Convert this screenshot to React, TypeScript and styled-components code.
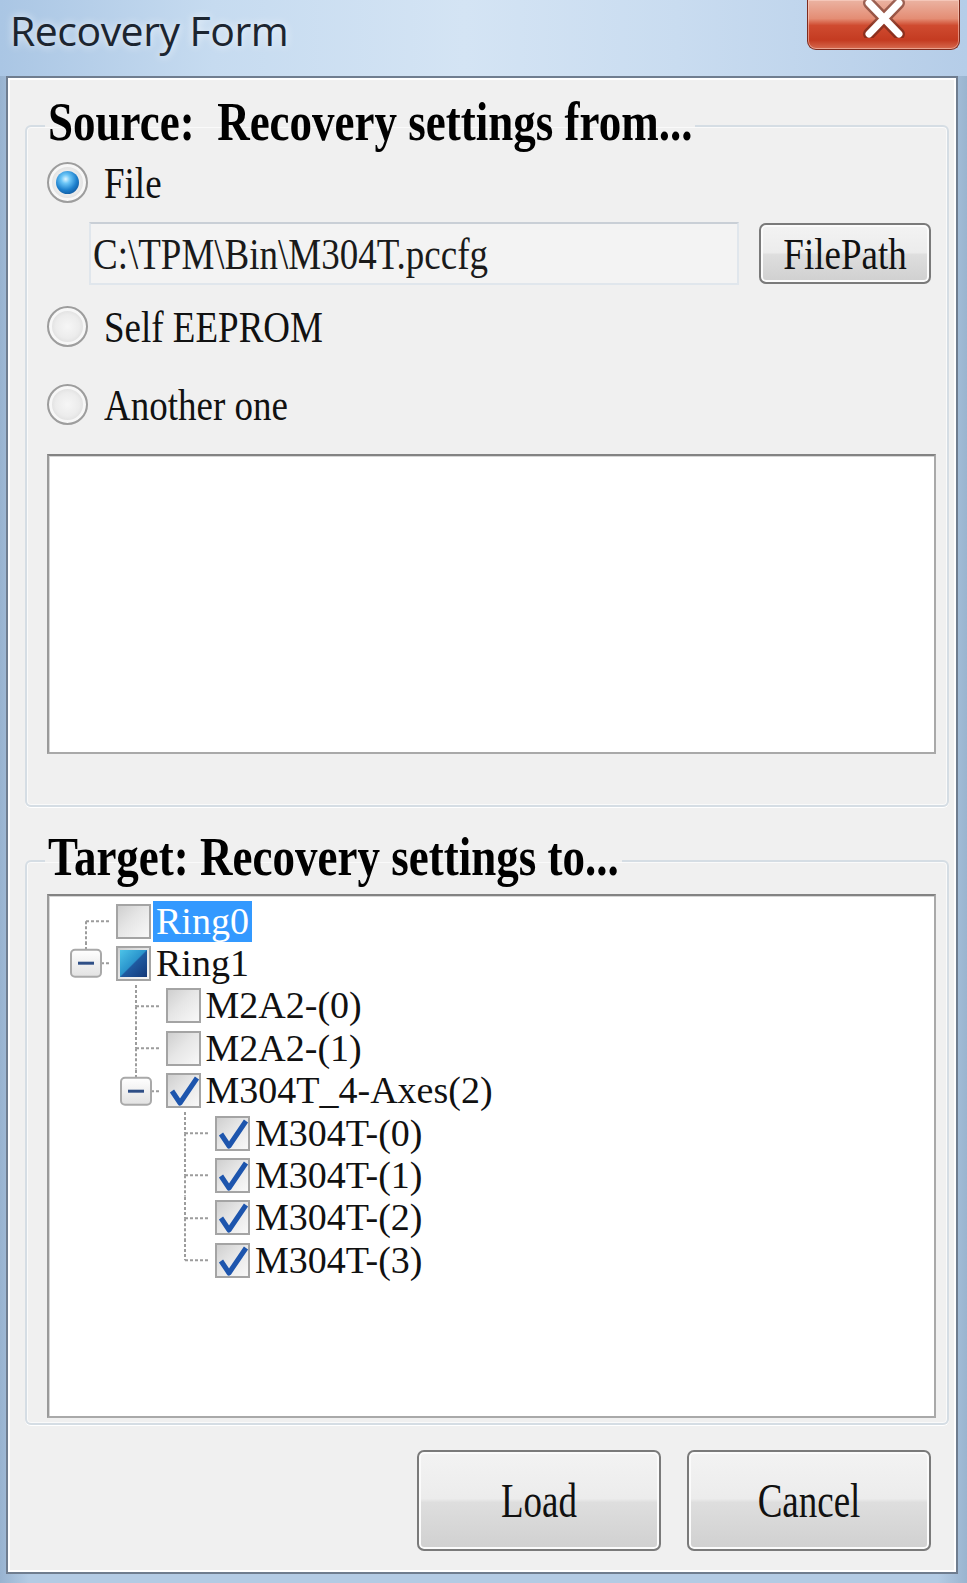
import { FC } from 'react';
import styled, { createGlobalStyle } from 'styled-components';

type Check = 'none' | 'checked' | 'partial';

interface TreeNode {
  level: number;
  label: string;
  check: Check;
  selected?: boolean;
  expander?: boolean;
  up: boolean;
  down: boolean;
}

const nodes: TreeNode[] = [
  { level: 0, label: 'Ring0', check: 'none', selected: true, up: false, down: true },
  { level: 0, label: 'Ring1', check: 'partial', expander: true, up: true, down: false },
  { level: 1, label: 'M2A2-(0)', check: 'none', up: true, down: true },
  { level: 1, label: 'M2A2-(1)', check: 'none', up: true, down: true },
  { level: 1, label: 'M304T_4-Axes(2)', check: 'checked', expander: true, up: true, down: false },
  { level: 2, label: 'M304T-(0)', check: 'checked', up: true, down: true },
  { level: 2, label: 'M304T-(1)', check: 'checked', up: true, down: true },
  { level: 2, label: 'M304T-(2)', check: 'checked', up: true, down: true },
  { level: 2, label: 'M304T-(3)', check: 'checked', up: true, down: false },
];

const ROW_H = 42.4;

const Connector: FC<{ node: TreeNode }> = ({ node }) => {
  const mid = ROW_H / 2;
  return (
    <svg width="50" height={ROW_H} viewBox={`0 0 50 ${ROW_H}`}>
      <g stroke="#9c9c9c" strokeWidth="2" strokeDasharray="3 2">
        {node.up && <line x1="20" y1="0" x2="20" y2={mid} />}
        {node.down && <line x1="20" y1={mid} x2="20" y2={ROW_H} />}
        <line x1="20" y1={mid} x2="45" y2={mid} />
      </g>
      {node.expander && (
        <g>
          <defs>
            <linearGradient id="exp" x1="0" y1="0" x2="0" y2="1">
              <stop offset="0" stopColor="#ffffff" />
              <stop offset="1" stopColor="#e2e2e2" />
            </linearGradient>
          </defs>
          <rect x="5" y={mid - 13.5} width="30" height="27" rx="4" fill="url(#exp)" stroke="#a9a9a9" strokeWidth="2" />
          <line x1="12" y1={mid} x2="28" y2={mid} stroke="#2f4f86" strokeWidth="3" />
        </g>
      )}
    </svg>
  );
};

const CheckBox: FC<{ state: Check }> = ({ state }) => (
  <Box>
    {state === 'partial' && <Partial />}
    {state === 'checked' && (
      <svg width="35" height="35" viewBox="0 0 35 35">
        <path d="M6 18 L14 30 L31 5" fill="none" stroke="#1d55ad" strokeWidth="5" strokeLinejoin="round" />
      </svg>
    )}
  </Box>
);

const App: FC = () => {
  return (
    <Window>
      <GlobalStyle />
      <TitleBar>
        <Title>Recovery Form</Title>
        <CloseButton>
          <svg width="46" height="38" viewBox="0 0 46 38">
            <path d="M8 3 L38 34 M38 3 L8 34" stroke="#5b2016" strokeOpacity="0.55" strokeWidth="12" strokeLinecap="round" />
            <path d="M8 3 L38 34 M38 3 L8 34" stroke="#ffffff" strokeWidth="7" strokeLinecap="round" />
          </svg>
        </CloseButton>
      </TitleBar>
      <Client>
        <Group>
          <Legend>
            <Tall>Source:  Recovery settings from...</Tall>
          </Legend>
          <RadioRow>
            <Radio>
              <Dot />
            </Radio>
            <Label>
              <Tall>File</Tall>
            </Label>
          </RadioRow>
          <PathRow>
            <TextBox>
              <Tall>C:\TPM\Bin\M304T.pccfg</Tall>
            </TextBox>
            <Button $w={172} $h={61}>
              <Tall>FilePath</Tall>
            </Button>
          </PathRow>
          <RadioRow $mt={19}>
            <Radio />
            <Label>
              <Tall>Self EEPROM</Tall>
            </Label>
          </RadioRow>
          <RadioRow $mt={34}>
            <Radio />
            <Label>
              <Tall>Another one</Tall>
            </Label>
          </RadioRow>
          <ListBox />
        </Group>
        <Group $target>
          <Legend>
            <Tall>Target: Recovery settings to...</Tall>
          </Legend>
          <TreeBox>
            {nodes.map((n) => (
              <TreeRow key={n.label} $level={n.level}>
                <Connector node={n} />
                <CheckBox state={n.check} />
                <NodeLabel $selected={n.selected}>{n.label}</NodeLabel>
              </TreeRow>
            ))}
          </TreeBox>
        </Group>
        <ButtonRow>
          <Button $w={244} $h={101}>
            <Tall $s={1.3}>Load</Tall>
          </Button>
          <Button $w={244} $h={101}>
            <Tall $s={1.3}>Cancel</Tall>
          </Button>
        </ButtonRow>
      </Client>
    </Window>
  );
};

export default App;

const GlobalStyle = createGlobalStyle`
  html, body {
    margin: 0;
    padding: 0;
  }
  body {
    background: #a6bfd9;
    font-family: "Liberation Serif", "Times New Roman", serif;
  }
`;

const Window = styled.div`
  width: 967px;
  height: 1583px;
  display: flex;
  flex-direction: column;
  box-sizing: border-box;
  background: linear-gradient(90deg, #98b3d0 0%, #b3cbe4 3%, #b3cbe4 97%, #9ab4cf 100%);
  overflow: hidden;
`;

const TitleBar = styled.div`
  height: 76px;
  flex: none;
  display: flex;
  justify-content: space-between;
  align-items: flex-start;
  padding-left: 10px;
  background: linear-gradient(90deg, #aac6e4 0%, #c6dbf0 22%, #d4e4f4 48%, #c9dcf0 70%, #b5cde8 100%);
`;

const Title = styled.div`
  font-family: "Open Sans", "Noto Sans", sans-serif;
  font-size: 41px;
  line-height: 60px;
  color: #1c2530;
  letter-spacing: -0.5px;
  text-shadow: 0 0 8px rgba(255, 255, 255, 0.9);
`;

const CloseButton = styled.div`
  width: 153px;
  height: 50px;
  margin-right: 7px;
  box-sizing: border-box;
  display: flex;
  justify-content: center;
  align-items: flex-start;
  border: 1px solid #7e2a1c;
  border-top: none;
  border-radius: 0 0 9px 9px;
  background: linear-gradient(#ebb3a2 0%, #e48d74 38%, #cf4b30 52%, #c43b21 82%, #d66a4f 100%);
  box-shadow: inset 0 0 0 1px rgba(255, 220, 210, 0.5);
`;

const Client = styled.div`
  flex: 1;
  margin: 0 9px 9px 6px;
  display: flex;
  flex-direction: column;
  box-sizing: border-box;
  padding: 18px 7px 21px 17px;
  border: 2px solid #6f7d8f;
  background: #f0f0f0;
  box-shadow: inset 0 0 0 2px #ffffff;
`;

const Group = styled.fieldset<{ $target?: boolean }>`
  margin: ${(p) => (p.$target ? '24px' : '0')} 0 0 0;
  padding: ${(p) => (p.$target ? '3px 11px 5px 20px' : '4px 11px 51px 20px')};
  border: 2px solid #d5dde4;
  border-radius: 6px;
  box-shadow: inset 0 0 0 1px #fafafa, 0 1px 0 #ffffff;
  min-width: 0;
  display: flex;
  flex-direction: column;
`;

const Legend = styled.legend`
  margin-left: -2px;
  padding: 0 3px 8px;
  font-size: 45px;
  line-height: 52px;
  font-weight: bold;
  white-space: pre;
  color: #000;
`;

const Tall = styled.span<{ $s?: number }>`
  display: inline-block;
  line-height: 0.9;
  transform: scaleY(${(p) => p.$s ?? 1.22});
  white-space: pre;
`;

const RadioRow = styled.div<{ $mt?: number }>`
  height: 44px;
  margin-top: ${(p) => p.$mt ?? 0}px;
  display: flex;
  align-items: center;
`;

const Radio = styled.span`
  width: 41px;
  height: 41px;
  box-sizing: border-box;
  border-radius: 50%;
  border: 2px solid #9d9d9d;
  background: radial-gradient(circle, #f6f6f6 0%, #ececec 45%, #d6d6d6 80%, #cbcbcb 100%);
  box-shadow: inset 0 0 0 3px #f7f7f7;
  display: flex;
  align-items: center;
  justify-content: center;
`;

const Dot = styled.span`
  width: 23px;
  height: 23px;
  border-radius: 50%;
  background: radial-gradient(circle at 42% 35%, #dff5ff 0%, #6cc6f7 22%, #1d80cd 55%, #0b4a8e 90%);
`;

const Label = styled.span`
  margin-left: 16px;
  font-size: 37px;
  color: #111;
`;

const PathRow = styled.div`
  margin-top: 18px;
  height: 63px;
  display: flex;
  align-items: center;
`;

const TextBox = styled.div`
  width: 650px;
  height: 63px;
  margin-left: 42px;
  margin-right: 20px;
  box-sizing: border-box;
  padding-left: 2px;
  display: flex;
  align-items: center;
  font-size: 37px;
  color: #1a1a1a;
  background: #f3f3f3;
  border: 2px solid #e0e6ec;
  border-top-color: #c9cfd6;
`;

const Button = styled.div<{ $w: number; $h: number }>`
  width: ${(p) => p.$w}px;
  height: ${(p) => p.$h}px;
  box-sizing: border-box;
  display: flex;
  align-items: center;
  justify-content: center;
  font-size: 37px;
  color: #111;
  border: 2px solid #7a7a7a;
  border-radius: 7px;
  background: linear-gradient(#f3f3f3 0%, #ececec 48%, #dedede 52%, #d0d0d0 100%);
  box-shadow: inset 0 0 0 2px #fbfbfb;
`;

const ListBox = styled.div`
  margin-top: 28px;
  height: 300px;
  box-sizing: border-box;
  background: #ffffff;
  border: 2px solid #a9a9a9;
  border-top-color: #838383;
  border-left-color: #9a9a9a;
  box-shadow: inset 1px 1px 0 #d6d6d6;
`;

const TreeBox = styled.div`
  height: 524px;
  box-sizing: border-box;
  padding: 4px 0 0 17px;
  background: #ffffff;
  border: 2px solid #a9a9a9;
  border-top-color: #838383;
  border-left-color: #9a9a9a;
  box-shadow: inset 1px 1px 0 #d6d6d6;
`;

const TreeRow = styled.div<{ $level: number }>`
  height: ${ROW_H}px;
  padding-left: ${(p) => p.$level * 49.5}px;
  display: flex;
  align-items: center;
`;

const Box = styled.span`
  position: relative;
  width: 35px;
  height: 35px;
  flex: none;
  box-sizing: border-box;
  border: 2px solid #a4a4a4;
  background: linear-gradient(135deg, #cfcfcf 0%, #e6e6e6 45%, #f8f8f8 100%);
  display: flex;
  align-items: center;
  justify-content: center;
  svg {
    position: absolute;
    left: -2px;
    top: -2px;
  }
`;

const Partial = styled.span`
  width: 27px;
  height: 27px;
  background: linear-gradient(135deg, #4cc3e8 0%, #2a94cc 48%, #1f5aa0 52%, #143878 100%);
`;

const NodeLabel = styled.span<{ $selected?: boolean }>`
  margin-left: 2px;
  padding: 0 3px;
  height: 41px;
  display: flex;
  align-items: center;
  font-size: 38px;
  line-height: 41px;
  white-space: pre;
  color: ${(p) => (p.$selected ? '#ffffff' : '#111111')};
  background: ${(p) => (p.$selected ? '#3399ff' : 'transparent')};
`;

const ButtonRow = styled.div`
  margin-top: 25px;
  padding-right: 18px;
  display: flex;
  justify-content: flex-end;
  gap: 26px;
`;
